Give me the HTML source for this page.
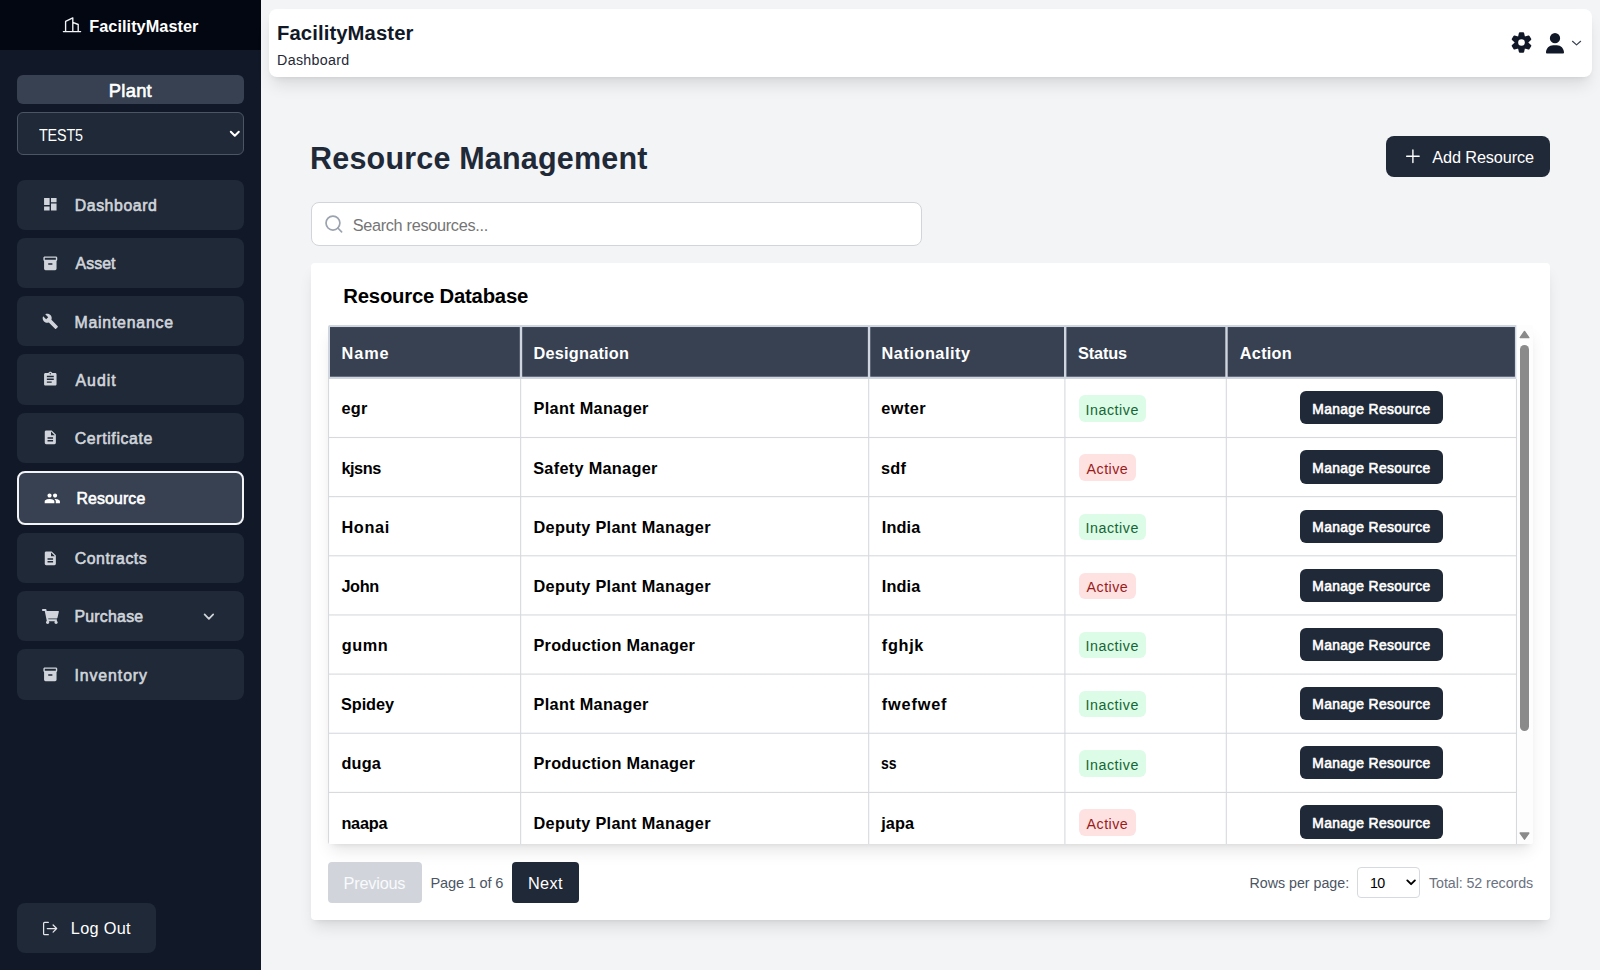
<!DOCTYPE html>
<html lang="en">
<head>
<meta charset="utf-8">
<title>FacilityMaster - Resource Management</title>
<style>
*{box-sizing:border-box;margin:0;padding:0}
html,body{width:1600px;height:970px;overflow:hidden}
body{font-family:"Liberation Sans",sans-serif;background:#f3f4f6;color:#111827;position:relative}
.t{position:absolute;white-space:nowrap;line-height:40px;font-weight:normal}
.t.b{font-weight:bold}
.a{position:absolute}
#sidebar{left:0;top:0;width:261px;height:970px;background:#111827}
#sbhead{left:0;top:0;width:261px;height:50px;background:#030712}
#plantlabel{left:16.7px;top:74.75px;width:227.4px;height:29.25px;background:#374151;border-radius:6px}
#plantsel{left:16.7px;top:112px;width:227.4px;height:43px;background:#1f2937;border:1px solid #4b5563;border-radius:6px}
.nav{left:16.7px;width:227.4px;height:50.2px;background:#1f2937;border-radius:8px}
.nav.on{left:16.7px;width:227.5px;height:53.5px;background:#374151;border:2px solid #f3f4f6;border-radius:8px}
#logoutb{left:16.8px;top:903.2px;width:139px;height:49.8px;background:#1f2937;border-radius:8px}
#topbar{left:269.1px;top:8.5px;width:1322.6px;height:68.4px;background:#fff;border-radius:8px;box-shadow:0 10.4px 15.6px -3px rgba(0,0,0,.10),0 4px 6px -4px rgba(0,0,0,.10)}
#addbtn{left:1386px;top:136px;width:164px;height:41px;background:#1f2937;border-radius:8px}
#search{left:311px;top:202px;width:611px;height:44px;background:#fff;border:1px solid #d1d5db;border-radius:8px}
#card{left:311.3px;top:262.8px;width:1239px;height:657.2px;background:#fff;border-radius:4px;box-shadow:0 10px 15px -3px rgba(0,0,0,.10),0 4px 6px -4px rgba(0,0,0,.10)}
#twrap{left:328px;top:325px;width:1205px;height:519px;background:#fff;border-radius:2px;box-shadow:0 10.4px 15.6px -3px rgba(0,0,0,.10),0 4px 6px -4px rgba(0,0,0,.10);overflow:hidden}
.hc{top:2px;height:50px;background:#374151}
.vl{top:2px;width:1px;height:517px;background:#d1d5db}
.hl{left:0;width:1189px;height:1px;background:#d1d5db}
.badge{height:26.5px;border-radius:6px}
.bi{background:#dcfce7;width:67px}
.ba{background:#fee2e2;width:57px}
.mb{width:142.5px;height:33.3px;background:#1f2937;border-radius:6px}
#prev{left:327.8px;top:862px;width:94.5px;height:40.8px;background:#d1d5db;border-radius:4px}
#next{left:511.9px;top:862px;width:67.1px;height:40.8px;background:#1f2937;border-radius:4px}
#rppsel{left:1357px;top:867px;width:62.6px;height:30.6px;background:#fff;border:1px solid #d6d9de;border-radius:4px}
svg{position:absolute;overflow:visible}
</style>
</head>
<body>
<div id="sidebar" class="a"></div><div id="sbhead" class="a"></div>
<svg style="left:0;top:0" width="261" height="50" fill="none" stroke="#f3f4f6" stroke-width="1.35" stroke-linecap="round" stroke-linejoin="round"><path d="M63.400 31.600H80.600M65.600 31.600V21.400L72.800 17.900V31.600M72.800 22.300L78.200 24.500V31.600"/></svg>
<span class="t b" style="left:89.29px;top:6.0px;font-size:16.3px;letter-spacing:0.039px;color:#fff">FacilityMaster</span>
<div id="plantlabel" class="a"></div><span class="t s" style="left:108.75px;top:71.0px;font-size:18.4px;letter-spacing:0.266px;color:#fff;-webkit-text-stroke:0.6px #fff">Plant</span>
<div id="plantsel" class="a"></div><span class="t n" style="left:38.5px;top:115.0px;font-size:16.3px;letter-spacing:-0.172px;color:#fff;transform:scaleX(0.88);transform-origin:0 0">TEST5</span>
<svg style="left:0;top:0" width="261" height="160" fill="none" stroke="#fff" stroke-width="2" stroke-linecap="round" stroke-linejoin="round"><path d="M230.8 131.8L234.8 135.8L238.8 131.8"/></svg>
<div class="a nav" style="top:179.7px"></div>
<svg style="left:41.6px;top:196.48px" width="16.64" height="16.64" viewBox="0 0 24 24" fill="#d1d5db"><path d="M3 13h8V3H3v10zm0 8h8v-6H3v6zm10 0h8V11h-8v10zm0-18v6h8V3h-8z"/></svg>
<span class="t s" style="left:74.74px;top:186.0px;font-size:15.85px;letter-spacing:0.571px;color:#d1d5db;-webkit-text-stroke:0.6px #d1d5db">Dashboard</span>
<div class="a nav" style="top:237.9px"></div>
<svg style="left:41.6px;top:254.68px" width="16.64" height="16.64" viewBox="0 0 24 24" fill="#d1d5db"><path d="M20 2H4c-1 0-2 .9-2 2v3.01c0 .72.43 1.34 1 1.69V20c0 1.1 1.1 2 2 2h14c.9 0 2-.9 2-2V8.7c.57-.35 1-.97 1-1.69V4c0-1.1-1-2-2-2zm-5 12H9v-2h6v2zm5-7H4V4h16v3z"/></svg>
<span class="t s" style="left:75.52px;top:244.0px;font-size:15.85px;letter-spacing:0.086px;color:#d1d5db;-webkit-text-stroke:0.6px #d1d5db">Asset</span>
<div class="a nav" style="top:296.1px"></div>
<svg style="left:41.6px;top:312.88px" width="16.64" height="16.64" viewBox="0 0 24 24" fill="#d1d5db"><path d="M22.7 19l-9.1-9.1c.9-2.3.4-5-1.5-6.9-2-2-5-2.400-7.4-1.300L9 6 6 9 1.600 4.700C.4 7.100.9 10.100 2.900 12.100c1.900 1.900 4.600 2.400 6.900 1.500l9.100 9.100c.4.400 1 .400 1.400 0l2.300-2.300c.5-.4.500-1.100.100-1.400z"/></svg>
<span class="t s" style="left:74.44px;top:303.0px;font-size:15.85px;letter-spacing:0.787px;color:#d1d5db;-webkit-text-stroke:0.6px #d1d5db">Maintenance</span>
<div class="a nav" style="top:354.4px"></div>
<svg style="left:41.6px;top:371.18px" width="16.64" height="16.64" viewBox="0 0 24 24" fill="#d1d5db"><path d="M19 3h-4.180C14.400 1.840 13.300 1 12 1c-1.300 0-2.400.840-2.820 2H5c-1.100 0-2 .900-2 2v14c0 1.100.900 2 2 2h14c1.100 0 2-.900 2-2V5c0-1.100-.900-2-2-2zm-7 0c.550 0 1 .450 1 1s-.450 1-1 1-1-.450-1-1 .450-1 1-1zm2 14H7v-2h7v2zm3-4H7v-2h10v2zm0-4H7V7h10v2z"/></svg>
<span class="t s" style="left:75.52px;top:361.0px;font-size:15.85px;letter-spacing:1.011px;color:#d1d5db;-webkit-text-stroke:0.6px #d1d5db">Audit</span>
<div class="a nav" style="top:412.6px"></div>
<svg style="left:41.6px;top:429.38px" width="16.64" height="16.64" viewBox="0 0 24 24" fill="#d1d5db"><path d="M14 2H6c-1.100 0-1.990.900-1.990 2L4 20c0 1.100.890 2 1.990 2H18c1.100 0 2-.900 2-2V8l-6-6zm2 16H8v-2h8v2zm0-4H8v-2h8v2zm-3-5V3.500L18.500 9H13z"/></svg>
<span class="t s" style="left:74.8px;top:419.0px;font-size:15.85px;letter-spacing:0.623px;color:#d1d5db;-webkit-text-stroke:0.6px #d1d5db">Certificate</span>
<div class="a nav on" style="top:471.2px"></div>
<svg style="left:43.6px;top:489.63px" width="16.64" height="16.64" viewBox="0 0 24 24" fill="#fff"><path d="M16 11c1.660 0 2.990-1.340 2.990-3S17.660 5 16 5c-1.660 0-3 1.340-3 3s1.340 3 3 3zm-8 0c1.660 0 2.990-1.340 2.990-3S9.660 5 8 5C6.340 5 5 6.340 5 8s1.340 3 3 3zm0 2c-2.330 0-7 1.170-7 3.500V19h14v-2.500c0-2.330-4.670-3.500-7-3.500zm8 0c-.290 0-.620.020-.970.050 1.160.840 1.970 1.970 1.970 3.450V19h6v-2.500c0-2.330-4.670-3.500-7-3.500z"/></svg>
<span class="t s" style="left:76.44px;top:479.0px;font-size:15.85px;letter-spacing:0.14px;color:#fff;-webkit-text-stroke:0.6px #fff">Resource</span>
<div class="a nav" style="top:533.1px"></div>
<svg style="left:41.6px;top:549.88px" width="16.64" height="16.64" viewBox="0 0 24 24" fill="#d1d5db"><path d="M14 2H6c-1.100 0-1.990.900-1.990 2L4 20c0 1.100.890 2 1.990 2H18c1.100 0 2-.900 2-2V8l-6-6zm2 16H8v-2h8v2zm0-4H8v-2h8v2zm-3-5V3.500L18.500 9H13z"/></svg>
<span class="t s" style="left:74.8px;top:539.0px;font-size:15.85px;letter-spacing:0.514px;color:#d1d5db;-webkit-text-stroke:0.6px #d1d5db">Contracts</span>
<div class="a nav" style="top:591.2px"></div>
<svg style="left:41.7px;top:608.80px" width="16.9" height="15" viewBox="0 0 576 512" fill="#d1d5db"><path d="M528.12 301.319l47.273-208C578.806 78.301 567.391 64 551.99 64H159.208l-9.166-44.81C147.758 8.021 137.93 0 126.529 0H24C10.745 0 0 10.745 0 24v16c0 13.255 10.745 24 24 24h69.883l70.248 343.435C147.325 417.1 136 435.222 136 456c0 30.928 25.072 56 56 56s56-25.072 56-56c0-15.674-6.447-29.835-16.824-40h209.647C430.447 426.165 424 440.326 424 456c0 30.928 25.072 56 56 56s56-25.072 56-56c0-22.172-12.888-41.332-31.579-50.405l5.517-24.276c3.413-15.018-8.002-29.319-23.403-29.319H218.117l-6.545-32h293.145c11.206 0 20.92-7.754 23.403-18.681z"/></svg>
<span class="t s" style="left:74.44px;top:597.0px;font-size:15.85px;letter-spacing:0.252px;color:#d1d5db;-webkit-text-stroke:0.6px #d1d5db">Purchase</span>
<div class="a nav" style="top:649.4px"></div>
<svg style="left:41.6px;top:666.18px" width="16.64" height="16.64" viewBox="0 0 24 24" fill="#d1d5db"><path d="M20 2H4c-1 0-2 .9-2 2v3.01c0 .72.43 1.34 1 1.69V20c0 1.1 1.1 2 2 2h14c.9 0 2-.9 2-2V8.7c.57-.35 1-.97 1-1.69V4c0-1.1-1-2-2-2zm-5 12H9v-2h6v2zm5-7H4V4h16v3z"/></svg>
<span class="t s" style="left:74.39px;top:656.0px;font-size:15.85px;letter-spacing:0.932px;color:#d1d5db;-webkit-text-stroke:0.6px #d1d5db">Inventory</span>
<svg style="left:0;top:0" width="261" height="700" fill="none" stroke="#d1d5db" stroke-width="1.7" stroke-linecap="round" stroke-linejoin="round"><path d="M204.6 614.3L208.9 618.9L213.2 614.3"/></svg>
<div id="logoutb" class="a"></div>
<svg style="left:0;top:0" width="261" height="970" fill="none" stroke="#e5e7eb" stroke-width="1.25" stroke-linecap="round" stroke-linejoin="round"><path d="M48.3 922.4H44.6a1 1 0 0 0-1 1V933.7a1 1 0 0 0 1 1H48.300M47.300 928.550H56.600M53.100 925L56.650 928.550L53.100 932.100"/></svg>
<span class="t n" style="left:70.83px;top:908.0px;font-size:16.3px;letter-spacing:0.3px;color:#fff">Log Out</span>
<div id="topbar" class="a"></div><span class="t b" style="left:277.02px;top:13.0px;font-size:20.3px;letter-spacing:0.086px;color:#111827">FacilityMaster</span><span class="t n" style="left:277.08px;top:40.0px;font-size:14.25px;letter-spacing:0.303px;color:#1f2937">Dashboard</span>
<svg style="left:0;top:0" width="1600" height="80"><path d="M1519.02 36.93L1519.86 33.30L1523.14 33.30L1523.98 36.93L1525.09 37.56L1528.65 36.47L1530.29 39.32L1527.57 41.86L1527.57 43.14L1530.29 45.68L1528.65 48.53L1525.09 47.44L1523.98 48.07L1523.14 51.70L1519.86 51.70L1519.02 48.07L1517.91 47.44L1514.35 48.53L1512.71 45.68L1515.43 43.14L1515.43 41.86L1512.71 39.32L1514.35 36.47L1517.91 37.56ZM1524.80 42.50A3.3 3.3 0 1 0 1518.20 42.50A3.3 3.3 0 1 0 1524.80 42.50Z" fill="#111827" stroke="#111827" stroke-width="2.0" stroke-linejoin="round" fill-rule="evenodd"/><circle cx="1521.5" cy="42.5" r="3.3" fill="#fff"/></svg>
<svg style="left:1545.700px;top:32.600px" width="18" height="20.600" viewBox="0 0 448 512" fill="#111827"><path d="M224 256A128 128 0 1 0 224 0a128 128 0 1 0 0 256zm-45.7 48C79.8 304 0 383.8 0 482.3C0 498.7 13.3 512 29.7 512H418.3c16.4 0 29.700-13.300 29.700-29.700C448 383.800 368.200 304 269.700 304H178.300z"/></svg>
<svg style="left:0;top:0" width="1600" height="80" fill="none" stroke="#374151" stroke-width="1.2" stroke-linecap="round" stroke-linejoin="round"><path d="M1572.500 41.300L1576.550 44.900L1580.600 41.300"/></svg>
<span class="t b" style="left:310.11px;top:138.0px;font-size:30.5px;letter-spacing:0.187px;color:#1f2937">Resource Management</span>
<div id="addbtn" class="a"></div>
<svg style="left:0;top:0" width="1600" height="200" fill="none" stroke="#fff" stroke-width="1.4" stroke-linecap="round"><path d="M1406.650 156.250H1419.150M1412.900 150V162.500"/></svg>
<span class="t n" style="left:1432.31px;top:137.0px;font-size:16.3px;letter-spacing:-0.128px;color:#fff">Add Resource</span>
<div id="search" class="a"></div>
<svg style="left:0;top:0" width="700" height="260" fill="none" stroke="#9ca3af" stroke-width="1.7" stroke-linecap="round"><circle cx="332.950" cy="223.100" r="6.930"/><path d="M337.840 228L341.600 231.800"/></svg>
<span class="t n" style="left:352.67px;top:205.0px;font-size:16.3px;letter-spacing:-0.313px;color:#757575">Search resources...</span>
<div id="card" class="a"></div><span class="t b" style="left:343.32px;top:276.0px;font-size:20.3px;letter-spacing:-0.206px;color:#000">Resource Database</span>
<div id="twrap" class="a"><svg style="left:0;top:0" width="1205" height="519"><rect x="0" y="0" width="1188.4" height="54" fill="#d0d6e0"/><rect x="2" y="2.05" width="189.8" height="49.65" fill="#374151"/><rect x="194.2" y="2.05" width="345.65" height="49.65" fill="#374151"/><rect x="542.25" y="2.05" width="193.75" height="49.65" fill="#374151"/><rect x="738.4" y="2.05" width="158.9" height="49.65" fill="#374151"/><rect x="899.7" y="2.05" width="287.2" height="49.65" fill="#374151"/><rect x="-0.05" y="54" width="1.100" height="465" fill="#d7d9dd"/><rect x="192.1" y="54" width="1.100" height="465" fill="#d7d9dd"/><rect x="540.15" y="54" width="1.100" height="465" fill="#d7d9dd"/><rect x="736.35" y="54" width="1.100" height="465" fill="#d7d9dd"/><rect x="897.75" y="54" width="1.100" height="465" fill="#d7d9dd"/><rect x="1187.95" y="54" width="1.100" height="465" fill="#d7d9dd"/><rect x="0" y="111.95" width="1188.5" height="1.100" fill="#d7d9dd"/><rect x="0" y="171.1" width="1188.5" height="1.100" fill="#d7d9dd"/><rect x="0" y="230.25" width="1188.5" height="1.100" fill="#d7d9dd"/><rect x="0" y="289.4" width="1188.5" height="1.100" fill="#d7d9dd"/><rect x="0" y="348.55" width="1188.5" height="1.100" fill="#d7d9dd"/><rect x="0" y="407.7" width="1188.5" height="1.100" fill="#d7d9dd"/><rect x="0" y="466.85" width="1188.5" height="1.100" fill="#d7d9dd"/></svg><div class="a badge bi" style="left:750.7px;top:70.2px"></div><div class="a mb" style="left:972px;top:66.2px"></div><div class="a badge ba" style="left:750.7px;top:129.35px"></div><div class="a mb" style="left:972px;top:125.35px"></div><div class="a badge bi" style="left:750.7px;top:188.5px"></div><div class="a mb" style="left:972px;top:184.5px"></div><div class="a badge ba" style="left:750.7px;top:247.65px"></div><div class="a mb" style="left:972px;top:243.65px"></div><div class="a badge bi" style="left:750.7px;top:306.8px"></div><div class="a mb" style="left:972px;top:302.8px"></div><div class="a badge bi" style="left:750.7px;top:365.95px"></div><div class="a mb" style="left:972px;top:361.95px"></div><div class="a badge bi" style="left:750.7px;top:425.1px"></div><div class="a mb" style="left:972px;top:421.1px"></div><div class="a badge ba" style="left:750.7px;top:484.25px"></div><div class="a mb" style="left:972px;top:480.25px"></div><div class="a" style="left:1189px;top:0;width:16px;height:519px;background:#fdfdfd"></div><div class="a" style="left:1191.9px;top:20px;width:9.100px;height:385.9px;background:#8a8a8a;border-radius:4.550px"></div><svg style="left:0;top:0" width="1205" height="519" fill="#8a8a8a" stroke="#8a8a8a" stroke-width="1.400" stroke-linejoin="round"><path d="M1196.5 6.5L1200.8 12.6H1192.2Z"/><path d="M1196.5 514.2L1200.8 508H1192.2Z"/></svg></div>
<div class="a" style="left:0;top:0;width:1600px;height:844px;overflow:hidden"><span class="t b" style="left:341.59px;top:333.0px;font-size:16.3px;letter-spacing:0.893px;color:#fff">Name</span><span class="t b" style="left:533.59px;top:333.0px;font-size:16.3px;letter-spacing:0.217px;color:#fff">Designation</span><span class="t b" style="left:881.59px;top:333.0px;font-size:16.3px;letter-spacing:0.523px;color:#fff">Nationality</span><span class="t b" style="left:1077.89px;top:333.0px;font-size:16.3px;letter-spacing:-0.094px;color:#fff">Status</span><span class="t b" style="left:1239.8px;top:333.0px;font-size:16.3px;letter-spacing:0.261px;color:#fff">Action</span><span class="t b" style="left:341.59px;top:388.0px;font-size:16.3px;letter-spacing:0.222px;color:#000">egr</span><span class="t b" style="left:533.59px;top:388.0px;font-size:16.3px;letter-spacing:0.295px;color:#000">Plant Manager</span><span class="t b" style="left:881.34px;top:388.0px;font-size:16.3px;letter-spacing:0.45px;color:#000">ewter</span><span class="t n" style="left:1085.53px;top:390.0px;font-size:14.25px;letter-spacing:0.535px;color:#166534">Inactive</span><span class="t s" style="left:1312.27px;top:389.0px;font-size:13.85px;letter-spacing:0.344px;color:#fff;-webkit-text-stroke:0.6px #fff">Manage Resource</span><span class="t b" style="left:341.49px;top:448.0px;font-size:16.3px;letter-spacing:-0.483px;color:#000">kjsns</span><span class="t b" style="left:533.19px;top:448.0px;font-size:16.3px;letter-spacing:0.295px;color:#000">Safety Manager</span><span class="t b" style="left:880.97px;top:448.0px;font-size:16.3px;letter-spacing:0.287px;color:#000">sdf</span><span class="t n" style="left:1086.56px;top:449.0px;font-size:14.25px;letter-spacing:0.487px;color:#991b1b">Active</span><span class="t s" style="left:1312.27px;top:448.0px;font-size:13.85px;letter-spacing:0.344px;color:#fff;-webkit-text-stroke:0.6px #fff">Manage Resource</span><span class="t b" style="left:341.49px;top:507.0px;font-size:16.3px;letter-spacing:0.63px;color:#000">Honai</span><span class="t b" style="left:533.49px;top:507.0px;font-size:16.3px;letter-spacing:0.317px;color:#000">Deputy Plant Manager</span><span class="t b" style="left:881.79px;top:507.0px;font-size:16.3px;letter-spacing:0.136px;color:#000">India</span><span class="t n" style="left:1085.53px;top:508.0px;font-size:14.25px;letter-spacing:0.535px;color:#166534">Inactive</span><span class="t s" style="left:1312.27px;top:507.0px;font-size:13.85px;letter-spacing:0.344px;color:#fff;-webkit-text-stroke:0.6px #fff">Manage Resource</span><span class="t b" style="left:341.4px;top:566.0px;font-size:16.3px;letter-spacing:-0.324px;color:#000">John</span><span class="t b" style="left:533.49px;top:566.0px;font-size:16.3px;letter-spacing:0.317px;color:#000">Deputy Plant Manager</span><span class="t b" style="left:881.79px;top:566.0px;font-size:16.3px;letter-spacing:0.136px;color:#000">India</span><span class="t n" style="left:1086.56px;top:567.0px;font-size:14.25px;letter-spacing:0.487px;color:#991b1b">Active</span><span class="t s" style="left:1312.27px;top:566.0px;font-size:13.85px;letter-spacing:0.344px;color:#fff;-webkit-text-stroke:0.6px #fff">Manage Resource</span><span class="t b" style="left:341.71px;top:625.0px;font-size:16.3px;letter-spacing:0.573px;color:#000">gumn</span><span class="t b" style="left:533.49px;top:625.0px;font-size:16.3px;letter-spacing:0.231px;color:#000">Production Manager</span><span class="t b" style="left:881.85px;top:625.0px;font-size:16.3px;letter-spacing:0.661px;color:#000">fghjk</span><span class="t n" style="left:1085.53px;top:626.0px;font-size:14.25px;letter-spacing:0.535px;color:#166534">Inactive</span><span class="t s" style="left:1312.27px;top:625.0px;font-size:13.85px;letter-spacing:0.344px;color:#fff;-webkit-text-stroke:0.6px #fff">Manage Resource</span><span class="t b" style="left:340.99px;top:684.0px;font-size:16.3px;letter-spacing:-0.078px;color:#000">Spidey</span><span class="t b" style="left:533.59px;top:684.0px;font-size:16.3px;letter-spacing:0.295px;color:#000">Plant Manager</span><span class="t b" style="left:881.85px;top:684.0px;font-size:16.3px;letter-spacing:0.817px;color:#000">fwefwef</span><span class="t n" style="left:1085.53px;top:685.0px;font-size:14.25px;letter-spacing:0.535px;color:#166534">Inactive</span><span class="t s" style="left:1312.27px;top:684.0px;font-size:13.85px;letter-spacing:0.344px;color:#fff;-webkit-text-stroke:0.6px #fff">Manage Resource</span><span class="t b" style="left:341.61px;top:743.0px;font-size:16.3px;letter-spacing:0.068px;color:#000">duga</span><span class="t b" style="left:533.49px;top:743.0px;font-size:16.3px;letter-spacing:0.231px;color:#000">Production Manager</span><span class="t b" style="left:881.04px;top:743.0px;font-size:16.3px;letter-spacing:-0.07px;color:#000;transform:scaleX(0.86);transform-origin:0 0">ss</span><span class="t n" style="left:1085.53px;top:745.0px;font-size:14.25px;letter-spacing:0.535px;color:#166534">Inactive</span><span class="t s" style="left:1312.27px;top:743.0px;font-size:13.85px;letter-spacing:0.344px;color:#fff;-webkit-text-stroke:0.6px #fff">Manage Resource</span><span class="t b" style="left:341.38px;top:803.0px;font-size:16.3px;letter-spacing:-0.212px;color:#000">naapa</span><span class="t b" style="left:533.49px;top:803.0px;font-size:16.3px;letter-spacing:0.317px;color:#000">Deputy Plant Manager</span><span class="t b" style="left:881.26px;top:803.0px;font-size:16.3px;letter-spacing:0.06px;color:#000">japa</span><span class="t n" style="left:1086.56px;top:804.0px;font-size:14.25px;letter-spacing:0.487px;color:#991b1b">Active</span><span class="t s" style="left:1312.27px;top:803.0px;font-size:13.85px;letter-spacing:0.344px;color:#fff;-webkit-text-stroke:0.6px #fff">Manage Resource</span></div>
<div id="prev" class="a"></div><span class="t n" style="left:343.53px;top:863.0px;font-size:16.3px;letter-spacing:-0.195px;color:#f9fafb">Previous</span><span class="t n" style="left:430.45px;top:863.0px;font-size:14.6px;letter-spacing:-0.164px;color:#4b5563">Page 1 of 6</span><div id="next" class="a"></div><span class="t n" style="left:527.93px;top:863.0px;font-size:16.3px;letter-spacing:0.362px;color:#fff">Next</span>
<span class="t n" style="left:1249.48px;top:863.0px;font-size:14.25px;letter-spacing:-0.011px;color:#4b5563">Rows per page:</span><div id="rppsel" class="a"></div><span class="t n" style="left:1370.11px;top:863.0px;font-size:14.25px;letter-spacing:-0.757px;color:#000">10</span><span class="t n" style="left:1429.02px;top:863.0px;font-size:14.25px;letter-spacing:-0.076px;color:#6b7280">Total: 52 records</span>
<svg style="left:0;top:0" width="1600" height="970" fill="none" stroke="#000" stroke-width="1.900" stroke-linecap="round" stroke-linejoin="round"><path d="M1407.300 880.400L1411.100 884.200L1414.900 880.400"/></svg>
</body>
</html>
